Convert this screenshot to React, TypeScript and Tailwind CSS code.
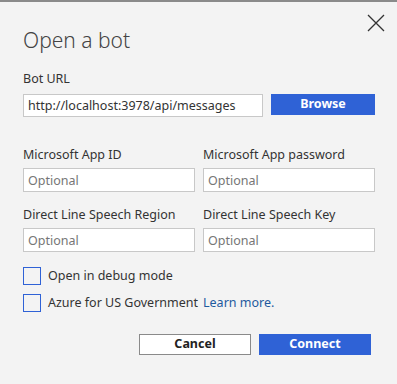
const Field = ({ label }: { label: string }) => {
  return (
    <div className="flex flex-col w-[172px]">
      <label className="text-[12.5px] leading-[18px] text-[#333]">{label}</label>
      <input
        placeholder="Optional"
        className="mt-[4px] h-[24px] w-full bg-white border border-[#c8c8c8] px-[4px] text-[12.5px] text-[#333] placeholder:text-[#767676] outline-none"
      />
    </div>
  );
};

const App = () => {
  return (
    <div className="relative w-[397px] h-[384px] bg-[#f3f3f3] border-t-2 border-[#8a8a8a] font-['Noto_Sans',sans-serif] text-[#333]">
      <button className="absolute top-[12px] left-[367px] text-[#333]">
        <svg width="18" height="18" viewBox="0 0 18 18" stroke="currentColor" strokeWidth="1.3" fill="none">
          <path d="M1 1L17 17M17 1L1 17" />
        </svg>
      </button>

      <div className="flex flex-col pl-[23px] pr-[22px] pt-[24px]">
        <h1 className="text-[21px] leading-[28px] font-light text-[#444]">Open a bot</h1>

        <label className="mt-[16px] text-[12.5px] leading-[18px]">Bot URL</label>
        <div className="mt-[6px] flex gap-[8px] items-start">
          <input
            defaultValue="http://localhost:3978/api/messages"
            className="h-[23px] w-[240px] bg-white border border-[#c8c8c8] px-[4px] text-[12.5px] text-[#333] outline-none"
          />
          <button className="h-[21px] w-[104px] bg-[#2f62d6] text-white text-[12.5px] font-bold">
            Browse
          </button>
        </div>

        <div className="mt-[29px] flex gap-[8px]">
          <Field label="Microsoft App ID" />
          <Field label="Microsoft App password" />
        </div>
        <div className="mt-[14px] flex gap-[8px]">
          <Field label="Direct Line Speech Region" />
          <Field label="Direct Line Speech Key" />
        </div>

        <div className="mt-[15px] flex flex-col gap-[8px]">
          <label className="flex items-center gap-[7px] text-[12.5px]">
            <span className="w-[18px] h-[18px] border border-[#2f62d6] bg-transparent" />
            Open in debug mode
          </label>
          <label className="flex items-center gap-[7px] text-[12.5px]">
            <span className="w-[18px] h-[18px] border border-[#2f62d6] bg-transparent" />
            <span>Azure for US Government</span>
            <a className="-ml-[2px] text-[#1e5a9e]">Learn more.</a>
          </label>
        </div>

        <div className="mt-[21px] flex justify-end gap-[8px] pr-[4px]">
          <button className="h-[21px] w-[112px] bg-white border border-[#8a8a8a] text-[12.5px] font-bold text-[#222]">
            Cancel
          </button>
          <button className="h-[21px] w-[112px] bg-[#2f62d6] text-white text-[12.5px] font-bold">
            Connect
          </button>
        </div>
      </div>
    </div>
  );
};

export default App;
